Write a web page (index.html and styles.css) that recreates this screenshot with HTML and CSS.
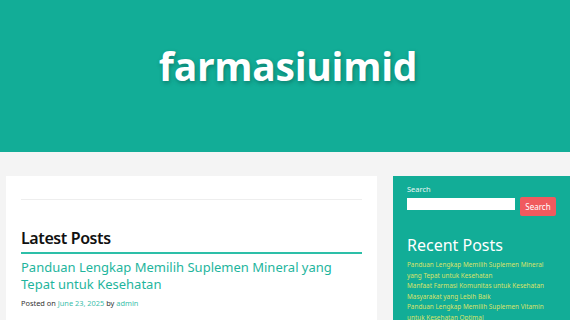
FILE: index.html
```html
<!DOCTYPE html>
<html>
<head>
<meta charset="utf-8">
<link rel="stylesheet" href="styles.css">
</head>
<body>
<header class="site-header">
  <h1 class="site-title">farmasiuimid</h1>
</header>
<div class="page">
  <main class="content">
    <div class="rule"></div>
    <h2 class="section-title">Latest Posts</h2>
    <article class="post">
      <h3 class="post-title"><a href="#">Panduan Lengkap Memilih Suplemen Mineral yang Tepat untuk Kesehatan</a></h3>
      <p class="meta">Posted on <a href="#">June 23, 2025</a> by <a href="#">admin</a></p>
    </article>
  </main>
  <aside class="sidebar">
    <div class="search-label">Search</div>
    <form class="search">
      <input class="search-input" type="text">
      <button class="search-btn" type="button">Search</button>
    </form>
    <h2 class="widget-title">Recent Posts</h2>
    <ul class="recent">
      <li><a href="#">Panduan Lengkap Memilih Suplemen Mineral yang Tepat untuk Kesehatan</a></li>
      <li><a href="#">Manfaat Farmasi Komunitas untuk Kesehatan Masyarakat yang Lebih Baik</a></li>
      <li><a href="#">Panduan Lengkap Memilih Suplemen Vitamin untuk Kesehatan Optimal</a></li>
    </ul>
  </aside>
</div>
</body>
</html>
```
FILE: styles.css
```css
html, body {
  margin: 0;
  padding: 0;
  background: #f4f4f4;
  font-family: "Noto Sans", "Open Sans", sans-serif;
  overflow: hidden;
}
a { text-decoration: none; }
.site-header {
  background: #12ad97;
  height: 152px;
  display: flex;
  align-items: center;
  justify-content: center;
}
.site-title {
  margin: 0 0 22px 6px;
  color: #fff;
  font-family: "Open Sans", sans-serif;
  font-weight: 700;
  font-size: 39px;
  letter-spacing: -0.3px;
  text-shadow: 1px 2px 4px rgba(0, 60, 50, 0.4);
}
.page {
  display: flex;
  padding: 24px 0 0 6px;
  gap: 16px;
}
.content {
  background: #fff;
  width: 341px;
  padding: 23px 15px 0 15px;
  height: 200px;
}
.rule {
  border-top: 1px solid #eeeeee;
}
.section-title {
  margin: 27px 0 0 0;
  font-size: 16px;
  font-weight: 600;
  letter-spacing: -0.4px;
  color: #111;
  line-height: 22px;
  padding-bottom: 3px;
  border-bottom: 2px solid #2dbfa8;
}
.post-title {
  margin: 5px 0 0 0;
  font-size: 13px;
  font-weight: 400;
  line-height: 17px;
}
.post-title a { color: #1eb59d; }
.meta {
  margin: 5px 0 0 0;
  font-size: 7.4px;
  color: #333;
}
.meta a { color: #3cc0ab; }
.sidebar {
  background: #12ad97;
  flex: 1;
  padding: 8px 14px 0 14px;
  height: 200px;
}
.search-label {
  color: #e8f6f3;
  font-size: 7.5px;
  line-height: 10px;
}
.search {
  display: flex;
  gap: 5px;
  margin-top: 3px;
  align-items: flex-start;
}
.search-input {
  width: 108px;
  height: 12px;
  border: none;
  padding: 0;
  margin: 1px 0 0 0;
  background: #fff;
}
.search-btn {
  background: #f05a5e;
  border: none;
  border-radius: 2px;
  color: #fff;
  font-family: "Noto Sans", sans-serif;
  font-size: 8px;
  width: 36px;
  height: 19px;
  padding: 0;
}
.widget-title {
  margin: 18px 0 0 0;
  color: #fff;
  font-weight: 400;
  font-size: 16px;
  line-height: 22px;
}
.recent {
  list-style: none;
  margin: 4px 0 0 0;
  padding: 0;
}
.recent li {
  font-size: 6.4px;
  line-height: 10.5px;
}
.recent a { color: #d9e36a; }
```
